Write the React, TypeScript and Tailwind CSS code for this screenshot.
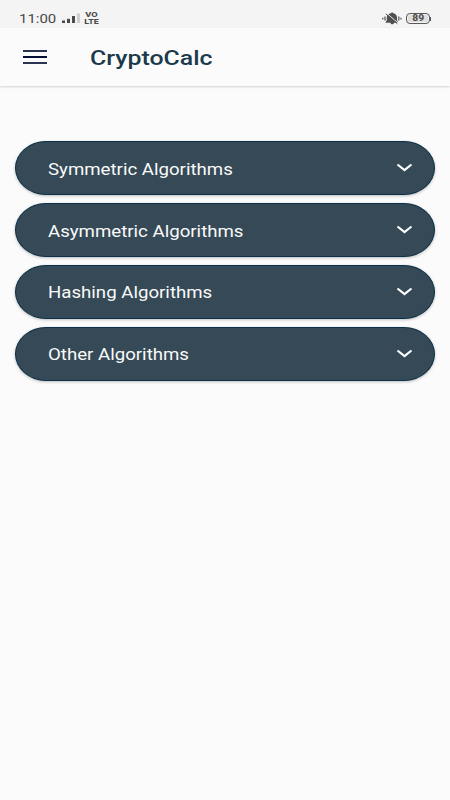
const algorithmGroups = [
  'Symmetric Algorithms',
  'Asymmetric Algorithms',
  'Hashing Algorithms',
  'Other Algorithms',
]

function SignalIcon() {
  return (
    <svg width="19" height="11" viewBox="0 0 19 11" fill="#4a4a4a">
      <rect x="0" y="7.500" width="3" height="2.500" />
      <rect x="5" y="5.800" width="3" height="4.200" />
      <rect x="10" y="3" width="3" height="7" />
      <rect x="15" y="0.500" width="3" height="9.500" fill="#cfcfcf" />
    </svg>
  )
}

function MutedBellIcon() {
  return (
    <svg width="20" height="13" viewBox="0 0 20 13" fill="none">
      <path
        d="M10.2 0.4c-.8 0-1 .5-1.3.9C6.300 1.800 4.800 3.500 4.800 5.500v2.700L3.700 10v.7h4.700c.3 1 1 1.600 1.800 1.600s1.600-.6 1.900-1.600h3.900V10l-1-1.800V5.500c0-2-1.400-3.700-3.700-4.200-.3-.4-.5-.9-1.100-.9z"
        fill="#505050"
      />
      <path d="M4.600 1.200l11.500 9.800" stroke="#f4f4f4" strokeWidth="0.900" />
      <path d="M3.800 1.900l11.500 9.800" stroke="#505050" strokeWidth="1" />
      <path d="M3 4.500v4M0.800 5.700v1.800M16.800 4.500v4M19 5.700v1.800" stroke="#505050" strokeWidth="1.200" />
    </svg>
  )
}

function StatusBar() {
  return (
    <div className="flex h-7 items-start justify-between bg-[#f4f4f4] text-[#4a4a4a]">
      <div className="flex">
        <span className="ml-[19px] mt-[11px] w-[43px] whitespace-nowrap text-[13px] leading-[16px]">
          <span className="inline-block origin-left scale-x-[1.15]">11:00</span>
        </span>
        <div className="mt-[13px]">
          <SignalIcon />
        </div>
        <div className="ml-[3px] mt-[11px] flex w-[14px] flex-col items-center text-[8px] font-extrabold leading-[7px]">
          <span className="scale-x-[1.15]">VO</span>
          <span className="scale-x-[1.1]">LTE</span>
        </div>
      </div>
      <div className="mr-[19px] flex">
        <div className="mr-[4px] mt-[12px]">
          <MutedBellIcon />
        </div>
        <div className="mt-[13px] flex h-[11px] items-center">
          <div className="flex h-[11px] w-6 items-center justify-center rounded-[4px] border border-[#5a5a5a] bg-[#dedede] text-[9px] font-bold leading-none shadow-[inset_0_0_0_1px_#f4f4f4]">
            <span className="scale-x-[1.15]">89</span>
          </div>
          <div className="h-1 w-px bg-[#5a5a5a]" />
        </div>
      </div>
    </div>
  )
}

function AppBar() {
  return (
    <header className="flex h-[58px] items-center bg-[#fbfbfb] shadow-[0_1px_2px_rgba(0,0,0,0.16)]">
      <button className="ml-[23px] flex w-6 flex-col gap-[4px]" aria-label="Menu">
        <span className="h-[2px] bg-[#2b3353]" />
        <span className="h-[2px] bg-[#050c35]" />
        <span className="h-[2px] bg-[#2b3353]" />
      </button>
      <h1 className="ml-[43px] mt-[4px] origin-left scale-x-[1.185] text-[21px] font-medium text-[#1c3a4b]">
        CryptoCalc
      </h1>
    </header>
  )
}

function AlgorithmGroup({ title }: { title: string }) {
  return (
    <button className="flex h-[54px] w-full items-center justify-between rounded-[31px/27px] border border-[#0b3048] bg-[#354956] pl-[31.500px] pr-[21px] text-left text-[#fafafa] shadow-[0_1px_3px_rgba(0,0,0,0.25)]">
      <span className="mt-[3px] origin-left scale-x-[1.165] text-[16px]">{title}</span>
      <svg width="17" height="10" viewBox="0 0 17 10" fill="none">
        <path d="M1.500 1.500l7 5.500 7-5.500" stroke="#fff" strokeWidth="2.200" />
      </svg>
    </button>
  )
}

export default function App() {
  return (
    <div className="h-[800px] w-[450px] overflow-hidden bg-[#fbfbfb] font-['Roboto',sans-serif]">
      <StatusBar />
      <AppBar />
      <main className="flex flex-col gap-[7.800px] px-[15px] pt-[55.400px]">
        {algorithmGroups.map((title) => (
          <AlgorithmGroup key={title} title={title} />
        ))}
      </main>
    </div>
  )
}
